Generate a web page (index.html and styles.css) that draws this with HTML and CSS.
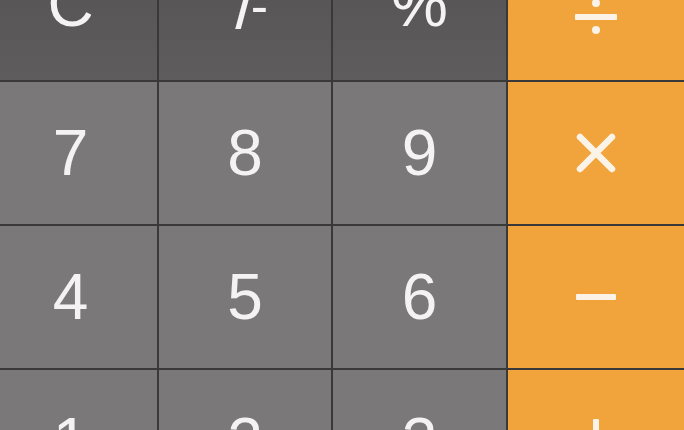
FILE: index.html
```html
<!DOCTYPE html>
<html lang="en">
<head>
<meta charset="utf-8">
<title>Calculator</title>
<link rel="stylesheet" href="styles.css">
</head>
<body>
<div class="pad">
  <button class="key fn">C</button>
  <button class="key fn"><span class="pm"><sup>+</sup>/<sub>-</sub></span></button>
  <button class="key fn">%</button>
  <button class="key op div" aria-label="divide">
    <svg width="44" height="40" viewBox="0 0 44 40"><circle cx="22" cy="6" r="4"/><rect x="1" y="17" width="42" height="6" rx="1"/><circle cx="22" cy="33" r="4"/></svg>
  </button>

  <button class="key num">7</button>
  <button class="key num">8</button>
  <button class="key num">9</button>
  <button class="key op" aria-label="multiply">
    <svg width="44" height="44" viewBox="0 0 44 44"><path d="M6 6 L38 38 M38 6 L6 38" stroke-width="6.5" stroke-linecap="round" fill="none"/></svg>
  </button>

  <button class="key num">4</button>
  <button class="key num">5</button>
  <button class="key num">6</button>
  <button class="key op" aria-label="subtract">
    <svg width="40" height="8" viewBox="0 0 40 8"><rect x="0" y="1" width="40" height="6" rx="1"/></svg>
  </button>

  <button class="key num">1</button>
  <button class="key num">2</button>
  <button class="key num">3</button>
  <button class="key op" aria-label="add">
    <svg width="44" height="44" viewBox="0 0 44 44"><rect x="0" y="19" width="44" height="6" rx="1"/><rect x="19" y="0" width="6" height="44" rx="1"/></svg>
  </button>
</div>
</body>
</html>
```

FILE: styles.css
```css
html, body {
  margin: 0;
  padding: 0;
  width: 684px;
  height: 430px;
  overflow: hidden;
  background: #3a3839;
}

.pad {
  display: grid;
  grid-template-columns: 173px 172px 173px 1fr;
  grid-auto-rows: 142px;
  gap: 2px;
  width: 700px;
  margin: -62px 0 0 -16px;
  background: #3a3839;
}

.key {
  display: flex;
  align-items: center;
  justify-content: center;
  border: 0;
  padding: 0;
  margin: 0;
  font-family: "Liberation Sans", Arial, sans-serif;
  font-size: 64px;
  font-weight: 400;
  color: #f4f2f2;
}

.fn {
  background: linear-gradient(#535152, #5e5c5d);
  padding-bottom: 10px;
}

.div {
  padding-top: 16px;
}

.num {
  background: #7b7879;
}

.op {
  background: #f1a43b;
}

.op svg {
  fill: #fbf3e8;
  stroke: #fbf3e8;
}

.op svg rect,
.op svg circle {
  stroke: none;
}

.pm {
  display: inline-flex;
  align-items: center;
  font-size: 70px;
  line-height: 1;
  margin-top: 0;
}

.pm sup {
  font-size: 40px;
  position: relative;
  top: -16px;
  margin-right: -10px;
}

.pm sub {
  font-size: 52px;
  position: relative;
  top: 2px;
  margin-left: -4px;
}
```
